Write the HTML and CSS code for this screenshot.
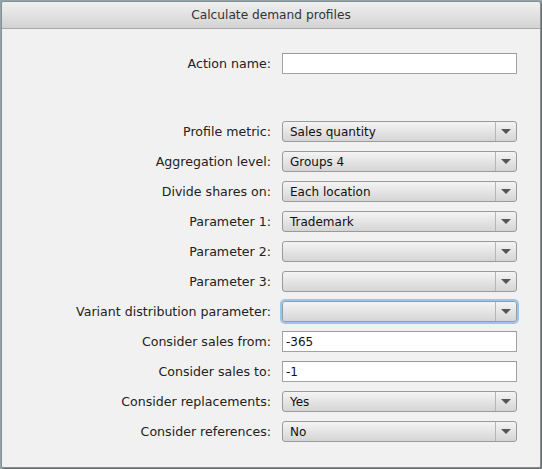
FILE: index.html
```html
<!DOCTYPE html>
<html>
<head>
<meta charset="utf-8">
<link rel="stylesheet" href="styles.css">
</head>
<body>
<div class="window">
  <div class="titlebar">Calculate demand profiles</div>
  <div class="content">
    <div class="form top">
      <label>Action name:</label>
      <div class="input"></div>
    </div>
    <div class="form">
      <label>Profile metric:</label>
      <div class="select"><span>Sales quantity</span><i></i></div>
      <label>Aggregation level:</label>
      <div class="select"><span>Groups 4</span><i></i></div>
      <label>Divide shares on:</label>
      <div class="select"><span>Each location</span><i></i></div>
      <label>Parameter 1:</label>
      <div class="select"><span>Trademark</span><i></i></div>
      <label>Parameter 2:</label>
      <div class="select"><span></span><i></i></div>
      <label>Parameter 3:</label>
      <div class="select"><span></span><i></i></div>
      <label>Variant distribution parameter:</label>
      <div class="select focus"><span></span><i></i></div>
      <label>Consider sales from:</label>
      <div class="input">-365</div>
      <label>Consider sales to:</label>
      <div class="input">-1</div>
      <label>Consider replacements:</label>
      <div class="select"><span>Yes</span><i></i></div>
      <label>Consider references:</label>
      <div class="select"><span>No</span><i></i></div>
    </div>
  </div>
</div>
</body>
</html>
```
FILE: styles.css
```css
html, body {
  margin: 0;
  padding: 0;
  background: #8fa7a8;
}
body {
  width: 542px;
  height: 469px;
  font-family: "DejaVu Sans", Verdana, sans-serif;
  font-size: 12px;
  color: #222;
}
.window {
  box-sizing: border-box;
  width: 540px;
  height: 467px;
  margin-left: 1px;
  margin-top: 1px;
  border: 1px solid #8c8c8c;
  border-radius: 3px 3px 2px 2px;
  background: #f1f1f1;
  overflow: hidden;
  box-shadow: 1px 1px 1px rgba(0,0,0,0.35);
}
.titlebar {
  height: 26px;
  line-height: 26px;
  text-align: center;
  font-size: 12.2px;
  color: #333;
  background: linear-gradient(#f0f0f0, #d3d3d3);
  border-bottom: 1px solid #a8a8a8;
}
.content {
  padding: 24px 23px 0 0;
}
.form {
  display: grid;
  grid-template-columns: 1fr 235px;
  column-gap: 11px;
  row-gap: 9px;
  align-items: center;
}
.form.top {
  margin-bottom: 47px;
}
label {
  text-align: right;
  white-space: nowrap;
  font-size: 12.6px;
  color: #222;
}
.input {
  box-sizing: border-box;
  height: 21px;
  line-height: 20px;
  padding-left: 3px;
  background: #fff;
  border: 1px solid #a2a2a2;
  border-top-color: #9a9a9a;
  color: #111;
}
.select {
  box-sizing: border-box;
  height: 21px;
  display: flex;
  align-items: stretch;
  border: 1px solid #9a9a9a;
  border-radius: 3px;
  background: linear-gradient(#f4f4f4, #d5d5d5);
}
.select span {
  flex: 1;
  line-height: 20px;
  padding-left: 7px;
  color: #111;
}
.select i {
  width: 20px;
  border-left: 1px solid #b5b5b5;
  position: relative;
}
.select i::after {
  content: "";
  position: absolute;
  left: 5px;
  top: 7px;
  border-left: 5px solid transparent;
  border-right: 5px solid transparent;
  border-top: 5px solid #555;
}
.select.focus {
  box-shadow: 0 0 0 2px #9cc4f0;
}
```
